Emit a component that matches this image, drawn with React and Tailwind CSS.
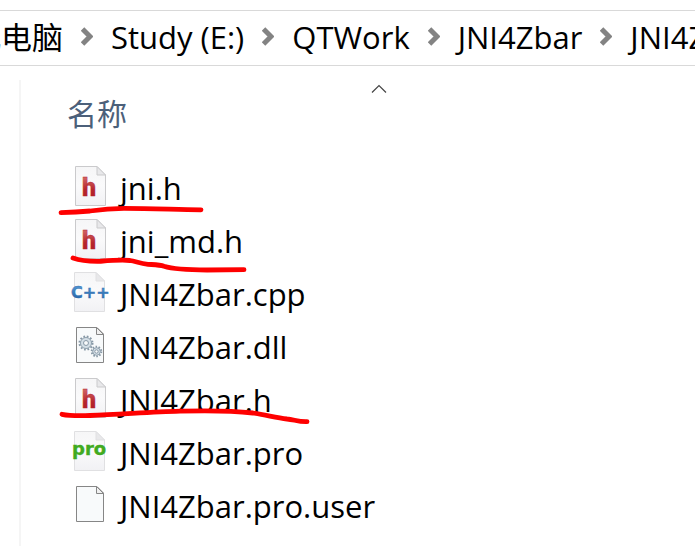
import React from 'react'

const path = ['此电脑', 'Study (E:)', 'QTWork', 'JNI4Zbar', 'JNI4Zbar']

const files = [
  { name: 'jni.h', type: 'h' },
  { name: 'jni_md.h', type: 'h' },
  { name: 'JNI4Zbar.cpp', type: 'cpp' },
  { name: 'JNI4Zbar.dll', type: 'dll' },
  { name: 'JNI4Zbar.h', type: 'h' },
  { name: 'JNI4Zbar.pro', type: 'pro' },
  { name: 'JNI4Zbar.pro.user', type: 'file' }
]

const Chevron = () => (
  <svg className="w-3 h-5 shrink-0" viewBox="0 0 12 20" aria-hidden="true">
    <path d="M1.5 2 L9 9.5 L1.5 17" fill="none" stroke="#838383" strokeWidth="5" />
  </svg>
)

// Soft page used by the source file types
const SoftPage = ({ x, border }) => (
  <g transform={`translate(${x} 6)`}>
    <path d="M.5 .5 H22 L30.5 9 V39.5 H.5 Z" fill="url(#softPage)" stroke={border} />
    <path d="M22 .5 V9 H30.5 Z" fill="#e8e8ea" stroke={border} strokeLinejoin="round" />
  </g>
)

// Outlined system page
const PlainPage = () => (
  <>
    <path d="M6.5 8.5 H27 L33.5 15 V43.5 H6.5 Z" fill="#f8fafb" stroke="#868686" />
    <path d="M26.5 8.5 V15.5 H33.5 Z" fill="#f0f0f0" stroke="#868686" />
  </>
)

const Gear = ({ cx, cy, r, teeth }) => (
  <g fill="none" stroke="#8798a6">
    <circle cx={cx} cy={cy} r={r + 1} strokeWidth="2" strokeDasharray={`${(Math.PI * (r + 1)) / teeth}`} />
    <circle cx={cx} cy={cy} r={r} fill="#d3dee6" strokeWidth="0.9" />
    <circle cx={cx} cy={cy} r={r * 0.45} fill="#f8fafb" strokeWidth="1" />
  </g>
)

const FileIcon = ({ type }) => (
  <svg className="w-10 h-[53px] shrink-0 overflow-visible" viewBox="0 0 40 53" aria-hidden="true">
    {type === 'h' && (
      <>
        <SoftPage x={5} border="#cacacc" />
        <text x="12" y="35.5" fontSize="25" fontWeight="900" fill="url(#redText)" stroke="#b3262c" strokeWidth="0.3" className="font-[Roboto,sans-serif]">h</text>
      </>
    )}
    {type === 'cpp' && (
      <>
        <SoftPage x={4} border="#e0e0e2" />
        <text x="1" y="32" fontSize="16" fontWeight="700" fill="url(#blueText)" stroke="#2f6fb2" strokeWidth="0.4" className="font-['DejaVu_Sans',sans-serif]">C++</text>
      </>
    )}
    {type === 'pro' && (
      <>
        <SoftPage x={4} border="#e0e0e2" />
        <text x="2" y="30" fontSize="18" fontWeight="700" fill="#41aa20" stroke="#41aa20" strokeWidth="0.4" className="font-['DejaVu_Sans',sans-serif]">pro</text>
      </>
    )}
    {type === 'dll' && (
      <>
        <PlainPage />
        <Gear cx={16} cy={24} r={5.5} teeth={12} />
        <Gear cx={26.5} cy={32.5} r={3.8} teeth={10} />
      </>
    )}
    {type === 'file' && <PlainPage />}
  </svg>
)

const Gradients = () => (
  <svg className="absolute w-0 h-0" aria-hidden="true">
    <defs>
      <linearGradient id="softPage" x1="0" y1="0" x2="0" y2="1">
        <stop offset="0" stopColor="#f6f6f7" />
        <stop offset="0.5" stopColor="#fafafb" />
        <stop offset="1" stopColor="#f1f1f4" />
      </linearGradient>
      <linearGradient id="redText" x1="0" y1="0" x2="0" y2="1">
        <stop offset="0.2" stopColor="#cf5f60" />
        <stop offset="0.6" stopColor="#b5262c" />
        <stop offset="1" stopColor="#b01c24" />
      </linearGradient>
      <linearGradient id="blueText" x1="0" y1="0" x2="0" y2="1">
        <stop offset="0.2" stopColor="#4f93cf" />
        <stop offset="1" stopColor="#1c5a9e" />
      </linearGradient>
    </defs>
  </svg>
)

// Hand-drawn marks under the header files
const Marks = () => (
  <svg
    className="absolute top-0 left-0 w-64 h-72 overflow-visible pointer-events-none"
    viewBox="0 0 256 288"
    fill="none"
    stroke="#fe0000"
    strokeWidth="4.8"
    strokeLinecap="round"
    strokeLinejoin="round"
    aria-hidden="true"
  >
    <path d="M-9 52.7 C0 52.5 10 52 20 51 C30 49.5 42 48.3 54 48.3 C84 48.3 104 49.5 131 49.8" />
    <path d="M3 98 C10 100.5 20 101.5 30 101.3 C40 100.5 52 99.5 60 100.5 C66 101.5 70 103.5 78 104.3 C86 104.8 90 104.8 94 106.3 C104 109.5 122 110 137 110 L174 109.7" />
    <path d="M-8 254.3 C0 256 6 256 20 255.5 C50 254.5 80 252 110 251.2 C140 250.3 160 250.5 183 253 C196 255 206 257.5 217 259 C224 259.5 228 262 237 261.7" />
  </svg>
)

const App = () => (
  <div className="bg-white text-black overflow-hidden font-['Open_Sans','Noto_Sans_CJK_SC',sans-serif]">
    <Gradients />
    <nav className="mt-[10px] h-14 pb-0.5 flex items-center gap-[18px] border-y border-[#d9d9d9] overflow-hidden whitespace-nowrap text-[31px] leading-10">
      {path.map((item, i) => (
        <React.Fragment key={i}>
          {i > 0 && <Chevron />}
          <a href="#" className={i === 0 ? '-ml-[30px]' : ''}>{item}</a>
        </React.Fragment>
      ))}
    </nav>

    <main className="mt-3.5 ml-[19px] pl-[41px] pb-4 border-l-2 border-[#f5f5f5]">
      <button className="w-full pt-1 flex flex-col text-left text-[30px] leading-10 text-[#4c607a]">
        <svg className="w-4 h-2.5 self-center" viewBox="0 0 16 10" aria-hidden="true">
          <path d="M1 8.5 L8 1.5 L15 8.5" fill="none" stroke="#444" strokeWidth="1.2" />
        </svg>
        <span className="pl-[5px]">名称</span>
      </button>

      <ul className="relative mt-[26px] ml-2">
        {files.map(file => (
          <li key={file.name} className="h-[53px] flex items-center gap-[10px] whitespace-nowrap text-[31px] leading-10">
            <FileIcon type={file.type} />
            <span className="pt-0.5">{file.name}</span>
          </li>
        ))}
        <Marks />
      </ul>
    </main>
  </div>
)

export default App
